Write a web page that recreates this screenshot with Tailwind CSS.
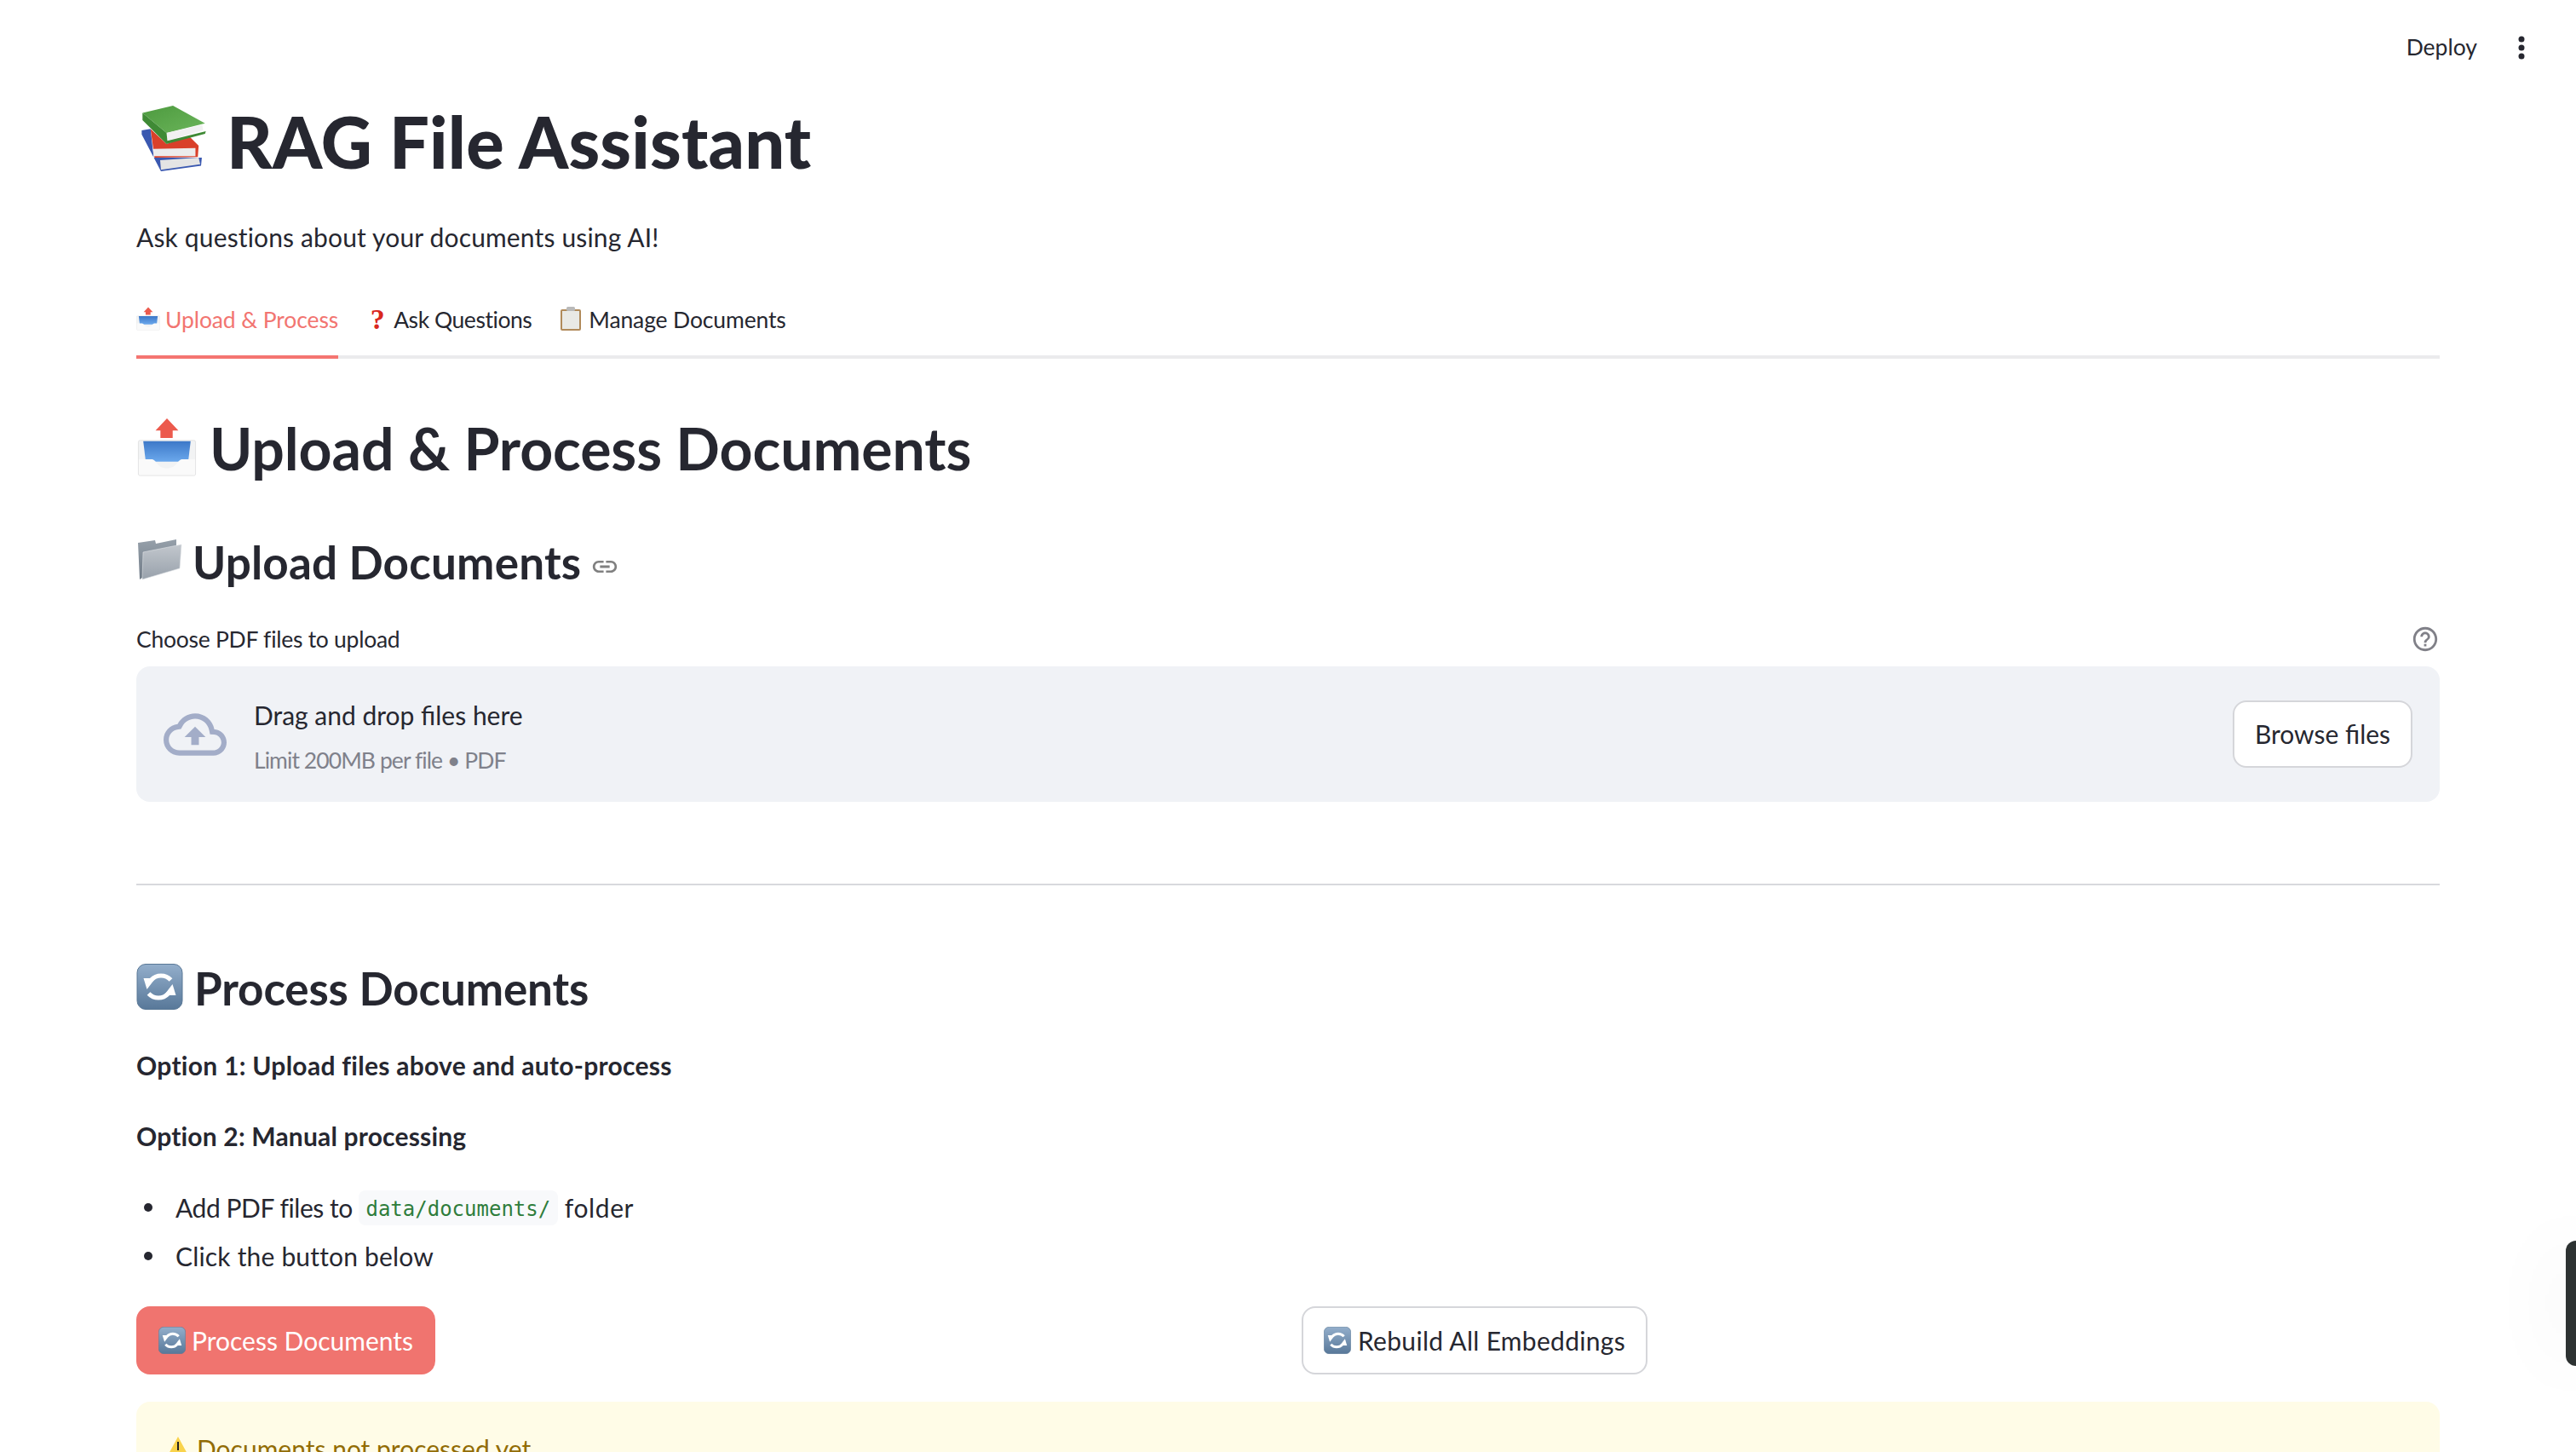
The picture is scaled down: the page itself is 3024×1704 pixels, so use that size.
<!DOCTYPE html>
<html lang="en">
<head>
  <meta charset="UTF-8" />
  <meta name="viewport" content="width=device-width, initial-scale=1" />
  <title>RAG File Assistant</title>
  <script src="https://cdn.jsdelivr.net/npm/@tailwindcss/browser@4"></script>
</head>
<body class="bg-white text-[#262730] font-['Lato','Noto_Sans',sans-serif]">

  <!-- shared emoji drawings -->
  <svg width="0" height="0" class="absolute">
    <defs>
      <linearGradient id="blueBox" x1="0" y1="0" x2="0" y2="1">
        <stop offset="0" stop-color="#93aecb" /><stop offset="1" stop-color="#587899" />
      </linearGradient>
      <linearGradient id="tray" x1="0" y1="0" x2="0" y2="1">
        <stop offset="0" stop-color="#3c78c8" /><stop offset="1" stop-color="#6ba8ec" />
      </linearGradient>
      <linearGradient id="folderBack" x1="0" y1="0" x2="0" y2="1">
        <stop offset="0" stop-color="#96a0aa" /><stop offset="1" stop-color="#6f7a86" />
      </linearGradient>
      <linearGradient id="folderFront" x1="0" y1="0" x2="0" y2="1">
        <stop offset="0" stop-color="#c2c7cd" /><stop offset="1" stop-color="#98a1ab" />
      </linearGradient>
      <linearGradient id="greenCover" x1="0" y1="0" x2="1" y2="1">
        <stop offset="0" stop-color="#4d9a3f" /><stop offset="1" stop-color="#6bb55a" />
      </linearGradient>
      <symbol id="refresh" viewBox="0 0 54 54">
        <rect x="0.5" y="0.5" width="53" height="53" rx="10" fill="url(#blueBox)" stroke="#5a7896" />
        <path d="M40 19 A15.5 15.5 0 0 0 17 19" fill="none" stroke="#fff" stroke-width="5" />
        <polygon points="8,17 22,17 12,30" fill="#fff" />
        <path d="M14 35 A15.5 15.5 0 0 0 37 35" fill="none" stroke="#fff" stroke-width="5" />
        <polygon points="46,37 32,37 42,24" fill="#fff" />
      </symbol>
      <symbol id="outbox" viewBox="10 8 72 73">
        <polygon points="46,9 60,24 53,24 53,33 38,33 38,24 32,24" fill="#ec5a4d" />
        <rect x="11" y="36" width="70" height="43" rx="2" fill="#f2f3f4" stroke="#dcdcdc" stroke-width="0.8" />
        <polygon points="17,37 75,37 72,62 20,62" fill="url(#tray)" />
        <path d="M11.5 59 L27 59 C34 59 33 70 46 70 C59 70 58 59 65 59 L80.5 59 L80.5 77 Q80.5 78.5 79 78.5 L13 78.5 Q11.5 78.5 11.5 77 Z" fill="#fafafa" />
      </symbol>
    </defs>
  </svg>

  <div class="relative w-[3024px] h-[1704px] overflow-hidden">

    <!-- HEADER -->
    <header class="flex justify-end items-center h-[112px] pr-[60px] gap-[48px]">
      <span class="text-[26.5px]">Deploy</span>
      <svg class="w-[8px] h-[28px]" viewBox="0 0 8 28" fill="#262730">
        <circle cx="4" cy="4" r="3.5" /><circle cx="4" cy="14" r="3.5" /><circle cx="4" cy="24" r="3.5" />
      </svg>
    </header>

    <main class="px-[160px]">
      <!-- TITLE -->
      <h1 class="flex mt-[4px] h-[100px] text-[83px] leading-[100px] font-black tracking-[0.2px]">
        <svg class="w-[80px] h-[80px] mt-[7px] ml-[4px] mr-[22px]" viewBox="16 14 82 85">
          <path d="M17 46 L28 44 L32 80 L92 80 L91 90 L41 97 L17 51 Z" fill="#3a58b0" />
          <path d="M40 83 L88 80 L90 88 L41 95 Z" fill="#e4e4e4" />
          <path d="M28 44 L48 63 L76 53 L88 65 L87 79 L33 80 Z" fill="#d9402a" />
          <path d="M31 69 L84 68 L84 78 L32.5 78 Z" fill="#ececec" />
          <path d="M18 24 L56 15 L96 37 L48 49 Z" fill="url(#greenCover)" />
          <path d="M48 49 L92.5 39 L93.6 46 L49 59 Z" fill="#f1f1f1" />
          <path d="M18 24 L48 49 L49 59 L97 47 L96 50 L48 63 L18 33 Z" fill="#3f8a35" />
        </svg>
        <span>RAG File Assistant</span>
      </h1>
      <p class="mt-[42px] text-[30px] leading-[40px] tracking-[0.005em]">Ask questions about your documents using AI!</p>

      <!-- TABS -->
      <nav class="flex gap-[32px] mt-[59px] h-[64px] border-b-4 border-[#ebebed] text-[26.5px] leading-[36px]">
        <div class="flex gap-[6px] h-[64px] border-b-4 border-[#f47571] text-[#f27571]">
          <svg class="w-[28px] h-[28px] mt-[3px]"><use href="#outbox" /></svg>
          <span class="tracking-[-0.004em]">Upload &amp; Process</span>
        </div>
        <div class="flex gap-[5px] h-[64px]">
          <span class="w-[28px] text-center font-['Liberation_Serif',serif] font-bold text-[34px] leading-[36px] text-[#d9281e]">?</span>
          <span class="tracking-[-0.017em]">Ask Questions</span>
        </div>
        <div class="flex gap-[7px] h-[64px]">
          <svg class="w-[28px] h-[28px] mt-[3px]" viewBox="0 0 28 28">
            <rect x="2" y="3" width="24" height="25" rx="2" fill="#b08a5a" />
            <rect x="4" y="5" width="20" height="21" fill="#e9e9e5" />
            <rect x="9" y="0" width="10" height="5" rx="1.5" fill="#b9b9b9" />
          </svg>
          <span class="tracking-[-0.005em]">Manage Documents</span>
        </div>
      </nav>

      <!-- UPLOAD -->
      <h2 class="flex mt-[65px] h-[80px] text-[68px] leading-[80px] font-bold tracking-[-0.1px]">
        <svg class="w-[70px] h-[70px] mt-[4px] ml-[1px] mr-[15px]"><use href="#outbox" /></svg>
        <span>Upload &amp; Process Documents</span>
      </h2>

      <h3 class="flex items-start mt-[62px] h-[64px] text-[53px] leading-[64px] font-bold tracking-[0.2px]">
        <svg class="w-[53px] h-[50px] mt-[4px] ml-[1px] mr-[12px]" viewBox="11 10 53 50">
          <path d="M12 15 L32 12 L33 16 L57 11 L57 20 L40 40 L14 58 Z" fill="url(#folderBack)" />
          <path d="M18 26 L63 17 L61 45 L17 58 Z" fill="url(#folderFront)" stroke="#dfe2e5" stroke-width="0.6" />
        </svg>
        <span>Upload Documents</span>
        <svg class="w-[34px] h-[34px] mt-[20px] ml-[11px]" viewBox="0 0 24 24" fill="#808080">
          <path d="M3.9 12c0-1.71 1.39-3.1 3.1-3.1h4V7H7c-2.76 0-5 2.24-5 5s2.24 5 5 5h4v-1.9H7c-1.71 0-3.1-1.39-3.1-3.1zM8 13h8v-2H8v2zm9-6h-4v1.9h4c1.71 0 3.1 1.39 3.1 3.1s-1.39 3.1-3.1 3.1h-4V17h4c2.76 0 5-2.24 5-5s-2.24-5-5-5z" />
        </svg>
      </h3>

      <div class="flex justify-between items-center mt-[40px] h-[36px] text-[26.5px] leading-[36px]">
        <span class="tracking-[-0.01em]">Choose PDF files to upload</span>
        <svg class="w-[34px] h-[34px]" viewBox="0 0 24 24" fill="#808088">
          <path d="M11 18h2v-2h-2v2zm1-16C6.48 2 2 6.48 2 12s4.48 10 10 10 10-4.48 10-10S17.52 2 12 2zm0 18c-4.41 0-8-3.59-8-8s3.59-8 8-8 8 3.59 8 8-3.59 8-8 8zm0-14c-2.21 0-4 1.79-4 4h2c0-1.1.9-2 2-2s2 .9 2 2c0 2-3 1.75-3 5h2c0-2.25 3-2.5 3-5 0-2.21-1.79-4-4-4z" />
        </svg>
      </div>

      <div class="flex items-center mt-[14px] h-[159px] pl-[32px] pr-[32px] rounded-[16px] bg-[#f0f2f6]">
        <svg class="w-[74px] h-[74px] mr-[32px]" viewBox="0 0 24 24" fill="#a3adc8">
          <path d="M19.35 10.04C18.67 6.59 15.64 4 12 4 9.11 4 6.6 5.64 5.35 8.04 2.34 8.36 0 10.91 0 14c0 3.31 2.69 6 6 6h13c2.76 0 5-2.24 5-5 0-2.64-2.05-4.78-4.65-4.96zM19 18H6c-2.21 0-4-1.79-4-4 0-2.05 1.53-3.76 3.56-3.97l1.07-.11.5-.95C8.08 7.14 9.94 6 12 6c2.62 0 4.88 1.86 5.39 4.43l.3 1.5 1.53.11c1.56.1 2.78 1.41 2.78 2.96 0 1.65-1.35 3-3 3zM8 13h2.55v3h2.9v-3H16l-4-4z" />
        </svg>
        <div class="flex flex-col gap-[15px] pt-[5px]">
          <span class="text-[30px] leading-[40px]">Drag and drop files here</span>
          <span class="text-[26.5px] leading-[36px] tracking-[-0.035em] text-[#7f818b]">Limit 200MB per file • PDF</span>
        </div>
        <button class="ml-auto w-[211px] h-[79px] rounded-[16px] border-2 border-[#d5d6da] bg-white text-[30px]">Browse files</button>
      </div>

      <hr class="mt-[96px] border-0 h-[2px] bg-[#d8d9dd]" />

      <!-- PROCESS -->
      <h3 class="flex items-start mt-[89px] h-[64px] text-[53px] leading-[64px] font-bold tracking-[-0.15px]">
        <svg class="w-[55px] h-[54px] mt-[3px] mr-[13px]"><use href="#refresh" /></svg>
        <span>Process Documents</span>
      </h3>

      <p class="mt-[38px] text-[30px] leading-[40px] font-bold tracking-[0.28px]">Option 1: Upload files above and auto-process</p>
      <p class="mt-[43px] text-[30px] leading-[40px] font-bold tracking-[0.18px]">Option 2: Manual processing</p>

      <ul class="mt-[44px] text-[30px] leading-[40px]">
        <li class="flex items-center h-[40px]">
          <span class="w-[10px] h-[10px] ml-[9px] mr-[27px] rounded-full bg-[#262730]"></span>
          <span class="tracking-[-0.015em]">Add PDF files to</span>
          <code class="ml-[7px] mr-[8px] w-[234px] h-[41px] text-center rounded-[8px] bg-[#f8f9fb] text-[#2f7d3c] text-[24px] leading-[45px] font-['DejaVu_Sans_Mono',monospace]">data/documents/</code>
          <span class="tracking-[0.02em]">folder</span>
        </li>
        <li class="flex items-center h-[40px] mt-[17px]">
          <span class="w-[10px] h-[10px] ml-[9px] mr-[27px] rounded-full bg-[#262730]"></span>
          <span class="tracking-[0.006em]">Click the button below</span>
        </li>
      </ul>

      <div class="grid grid-cols-2 gap-[32px] mt-[39px]">
        <div>
          <button class="inline-flex items-center gap-[7px] h-[80px] px-[26px] rounded-[16px] bg-[#f0746f] text-white text-[30px]">
            <svg class="w-[32px] h-[32px]"><use href="#refresh" /></svg>
            <span>Process Documents</span>
          </button>
        </div>
        <div>
          <button class="inline-flex items-center gap-[8px] h-[80px] px-[24px] rounded-[16px] border-2 border-[#d5d6da] bg-white text-[30px]">
            <svg class="w-[32px] h-[32px]"><use href="#refresh" /></svg>
            <span class="tracking-[0.01em]">Rebuild All Embeddings</span>
          </button>
        </div>
      </div>

      <div class="flex gap-[10px] mt-[32px] h-[120px] pt-[35px] pl-[37px] rounded-[16px] bg-[#fffce7] text-[#926c05] text-[30px] leading-[40px]">
        <svg class="w-[24px] h-[22px] mt-[6px]" viewBox="0 0 24 22">
          <path d="M12 0 L24 22 L0 22 Z" fill="#f9d34c" />
          <rect x="11" y="6" width="2" height="10" fill="#222" />
        </svg>
        <span>Documents not processed yet</span>
      </div>
    </main>

    <!-- floating pill on the right edge -->
    <div class="absolute right-0 top-[1456px] w-[12px] h-[147px] rounded-l-[24px] bg-[#2d3232] shadow-[0_0_90px_rgba(0,0,0,0.14)]"></div>
  </div>
</body>
</html>
